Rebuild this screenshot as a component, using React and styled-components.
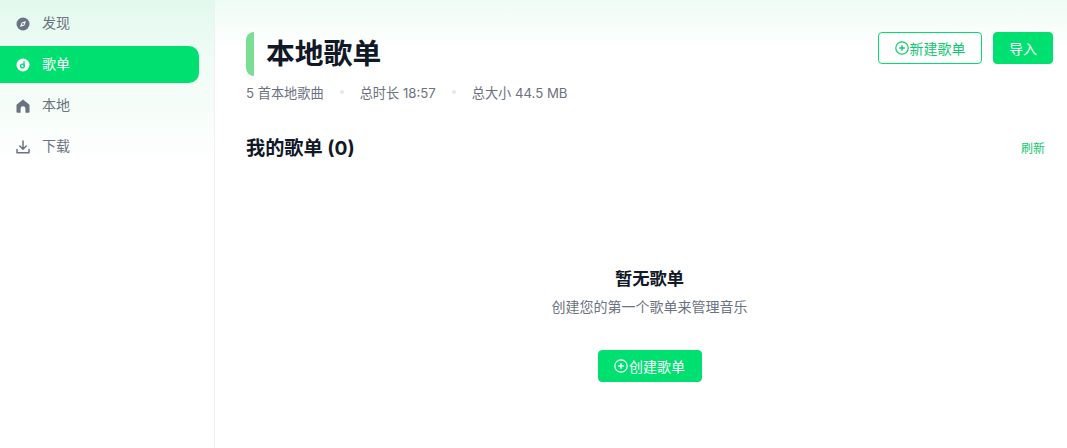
import React from 'react';
import styled, { createGlobalStyle } from 'styled-components';

const GlobalStyle = createGlobalStyle`
  html, body, #root { margin: 0; padding: 0; height: 100%; }
  body {
    background: #fff;
    overflow: hidden;
    font-family: Inter, "Noto Sans CJK SC", "Noto Sans", sans-serif;
  }
  * { box-sizing: border-box; }
`;

const GREEN = '#00e070';

const Page = styled.div`
  display: flex;
  width: 1067px;
  height: 448px;
`;

const Sidebar = styled.aside`
  width: 215px;
  flex: none;
  padding-top: 5px;
  display: flex;
  flex-direction: column;
  gap: 4px;
  border-right: 1px solid #eef0f2;
  background: linear-gradient(180deg, #e2f9ed 0%, #f0fcf6 60px, #f6fdf9 110px, #ffffff 165px);
`;

const NavItem = styled.div`
  display: flex;
  align-items: center;
  gap: 12px;
  width: 199px;
  height: 37px;
  padding-left: 16px;
  border-radius: ${p => (p.$active ? '0 10px 10px 0' : '0')};
  background: ${p => (p.$active ? GREEN : 'transparent')};
  color: ${p => (p.$active ? '#fff' : '#6b7280')};
  font-size: 14px;
  font-weight: 400;
  line-height: 17px;
  svg { flex: none; display: block; }
`;

const NavLabel = styled.span`
  display: block;
  margin-top: -2px;
`;

const Main = styled.main`
  flex: 1;
  min-width: 0;
  padding: 32px 14px 0 31px;
  display: flex;
  flex-direction: column;
  background: linear-gradient(180deg, #effcf5 0%, #ffffff 50px);
`;

const HeaderRow = styled.div`
  display: flex;
  justify-content: space-between;
  align-items: flex-start;
`;

const TitleBlock = styled.div`
  display: flex;
  align-items: center;
  gap: 12px;
  height: 44px;
`;

const Accent = styled.span`
  width: 8px;
  height: 44px;
  border-radius: 8px 0 0 8px;
  background: #7adf94;
`;

const Title = styled.h1`
  margin: 0;
  font-size: 28.8px;
  font-weight: 700;
  line-height: 44px;
  color: #111827;
`;

const Actions = styled.div`
  display: flex;
  gap: 11px;
`;

const Button = styled.button`
  display: flex;
  align-items: center;
  justify-content: center;
  gap: 1px;
  height: 32px;
  width: ${p => p.$width}px;
  padding: 0;
  border-radius: 4px;
  border: 1px solid ${GREEN};
  background: ${p => (p.$outline ? '#fff' : GREEN)};
  color: ${p => (p.$outline ? '#10c870' : '#fff')};
  font-family: inherit;
  font-size: 14px;
  font-weight: 400;
  svg { flex: none; }
`;

const Meta = styled.div`
  display: flex;
  align-items: center;
  margin-top: 7px;
  height: 18px;
  font-size: 13.2px;
  color: #6b7280;
`;

const Dot = styled.span`
  width: 4px;
  height: 4px;
  margin: 0 16px;
  border-radius: 50%;
  background: #e5e7eb;
`;

const SectionRow = styled.div`
  display: flex;
  justify-content: space-between;
  align-items: center;
  margin-top: 34px;
  padding-right: 8px;
  height: 24px;
`;

const SectionTitle = styled.h2`
  margin: 0;
  font-size: 19.2px;
  font-weight: 700;
  color: #111827;
`;

const Refresh = styled.span`
  font-size: 12px;
  color: #10c870;
`;

const Empty = styled.div`
  display: flex;
  flex-direction: column;
  align-items: center;
  margin-top: 108px;
`;

const EmptyTitle = styled.div`
  font-size: 17.3px;
  font-weight: 700;
  line-height: 24px;
  color: #111827;
`;

const EmptyText = styled.div`
  margin-top: 7px;
  font-size: 14px;
  line-height: 18px;
  color: #6b7280;
`;

const EmptyAction = styled.div`
  margin-top: 34px;
`;

const DiscIcon = () => (
  <svg width="14" height="14" viewBox="0 0 14 14">
    <circle cx="7" cy="7" r="6.5" fill="currentColor" />
    <path d="M10 4 8.4 8.4 4 10 5.6 5.6Z" fill="#e8fbf1" />
    <circle cx="7" cy="7" r=".9" fill="currentColor" />
  </svg>
);

const PlaylistIcon = () => (
  <svg width="14" height="14" viewBox="0 0 14 14">
    <circle cx="7" cy="7" r="6.5" fill="currentColor" />
    <circle cx="6.4" cy="8" r="1.9" fill="#fff" stroke={GREEN} strokeWidth="1.3" />
    <path d="M8 8V3.2" fill="none" stroke={GREEN} strokeWidth="1.4" />
  </svg>
);

const HomeIcon = () => (
  <svg width="14" height="14" viewBox="0 0 14 14">
    <path
      d="M7 .6 13.2 5.6a.8.8 0 0 1 .3.6V13a.8.8 0 0 1-.8.8H9.4V9.6a2.4 2.4 0 0 0-4.8 0v4.2H1.3a.8.8 0 0 1-.8-.8V6.2a.8.8 0 0 1 .3-.6Z"
      fill="currentColor"
    />
  </svg>
);

const DownloadIcon = () => (
  <svg width="14" height="14" viewBox="0 0 14 14" fill="none" stroke="currentColor" strokeWidth="1.5" strokeLinecap="round" strokeLinejoin="round">
    <path d="M7 1v8M3.8 6 7 9.2 10.2 6" />
    <path d="M1 9.5v3.3h12V9.5" />
  </svg>
);

const PlusCircle = () => (
  <svg width="14" height="14" viewBox="0 0 14 14" fill="none" stroke="currentColor">
    <circle cx="7" cy="7" r="6.2" strokeWidth="1.2" />
    <path d="M7 4.2v5.6M4.2 7h5.6" strokeWidth="1.4" />
  </svg>
);

const navItems = [
  { label: '发现', icon: <DiscIcon /> },
  { label: '歌单', icon: <PlaylistIcon />, active: true },
  { label: '本地', icon: <HomeIcon /> },
  { label: '下载', icon: <DownloadIcon /> },
];

export default function App() {
  return (
    <>
      <GlobalStyle />
      <Page>
        <Sidebar>
          {navItems.map(item => (
            <NavItem key={item.label} $active={item.active}>
              {item.icon}
              <NavLabel>{item.label}</NavLabel>
            </NavItem>
          ))}
        </Sidebar>
        <Main>
          <HeaderRow>
            <TitleBlock>
              <Accent />
              <Title>本地歌单</Title>
            </TitleBlock>
            <Actions>
              <Button $outline $width={104}><PlusCircle />新建歌单</Button>
              <Button $width={60}>导入</Button>
            </Actions>
          </HeaderRow>
          <Meta>
            <span>5 首本地歌曲</span>
            <Dot />
            <span>总时长 18:57</span>
            <Dot />
            <span>总大小 44.5 MB</span>
          </Meta>
          <SectionRow>
            <SectionTitle>我的歌单 (0)</SectionTitle>
            <Refresh>刷新</Refresh>
          </SectionRow>
          <Empty>
            <EmptyTitle>暂无歌单</EmptyTitle>
            <EmptyText>创建您的第一个歌单来管理音乐</EmptyText>
            <EmptyAction>
              <Button $width={104}><PlusCircle />创建歌单</Button>
            </EmptyAction>
          </Empty>
        </Main>
      </Page>
    </>
  );
}
